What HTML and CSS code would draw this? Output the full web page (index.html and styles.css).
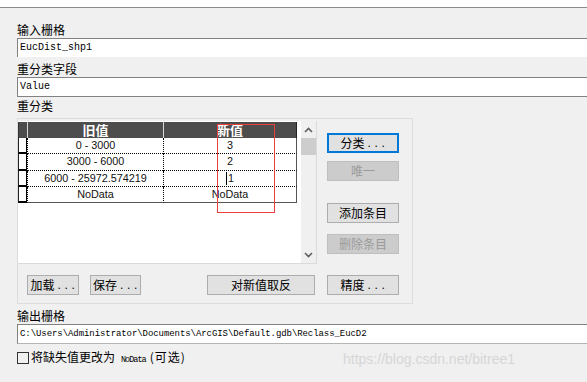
FILE: index.html
```html
<!DOCTYPE html>
<html lang="zh">
<head>
<meta charset="utf-8">
<link rel="stylesheet" href="styles.css">
</head>
<body>
<div class="topbar"></div>
<main class="dialog">
  <div class="label">输入栅格</div>
  <div class="field field-open">EucDist_shp1</div>
  <div class="label gap4">重分类字段</div>
  <div class="field field-closed">Value</div>
  <div class="label gap1">重分类</div>
  <section class="group">
    <div class="group-top">
      <div class="list">
        <div class="grid-area">
          <div class="row head">
            <div class="rh"></div><div class="c1">旧值</div><div class="c2">新值</div>
          </div>
          <div class="row"><div class="rh"></div><div class="c1">0 - 3000</div><div class="c2">3</div></div>
          <div class="row tall"><div class="rh"></div><div class="c1">3000 - 6000</div><div class="c2">2</div></div>
          <div class="row"><div class="rh"></div><div class="c1">6000 - 25972.574219</div><div class="c2"><span class="caret"></span>1</div></div>
          <div class="row last"><div class="rh"></div><div class="c1">NoData</div><div class="c2">NoData</div></div>
        </div>
        <div class="scrollbar">
          <div class="sb-btn"><svg width="9" height="6" viewBox="0 0 9 6"><polyline points="1,5 4.5,1.5 8,5" fill="none" stroke="#606060" stroke-width="1.6"/></svg></div>
          <div class="sb-thumb"></div>
          <div class="sb-track"></div>
          <div class="sb-btn"><svg width="9" height="6" viewBox="0 0 9 6"><polyline points="1,1 4.5,4.5 8,1" fill="none" stroke="#606060" stroke-width="1.6"/></svg></div>
        </div>
        <div class="mark"></div>
      </div>
      <div class="side">
        <div class="btn focus">分类<span class="dots">...</span></div>
        <div class="btn disabled b-unique">唯一</div>
        <div class="btn b-add">添加条目</div>
        <div class="btn disabled b-del">删除条目</div>
      </div>
    </div>
    <div class="group-bottom">
      <div class="btn b-load">加载<span class="dots">...</span></div>
      <div class="btn b-save">保存<span class="dots">...</span></div>
      <div class="btn b-invert">对新值取反</div>
      <div class="btn b-prec">精度<span class="dots">...</span></div>
    </div>
  </section>
  <div class="label gap4">输出栅格</div>
  <div class="field field-out">C:\Users\Administrator\Documents\ArcGIS\Default.gdb\Reclass_EucD2</div>
  <div class="check-row">
    <span class="checkbox"></span>
    <span class="check-text">将缺失值更改为<span class="mono">NoData</span><span class="opt">(可选)</span></span>
  </div>
  <div class="watermark">https://blog.csdn.net/bitree1</div>
</main>
</body>
</html>
```
FILE: styles.css
```css
html, body {
  margin: 0;
  padding: 0;
}
body {
  width: 587px;
  height: 382px;
  overflow: hidden;
  background: #f0f0f0;
  font-family: "Noto Sans CJK SC", "Noto Sans", sans-serif;
  color: #000;
  position: relative;
}
.topbar {
  height: 7px;
  background: #fff;
  border-bottom: 1px solid #8a8a8a;
}
.dialog {
  padding: 14px 0 0 17px;
}
.label {
  height: 16px;
  line-height: 16px;
  font-size: 12px;
  white-space: nowrap;
}
.gap4 { margin-top: 4px; }
.gap1 { margin-top: 1px; }
.field {
  box-sizing: border-box;
  height: 19px;
  background: #fff;
  border-top: 1px solid #828282;
  border-left: 1px solid #828282;
  font-family: "Liberation Mono", monospace;
  font-size: 10px;
  line-height: 18px;
  padding-left: 2px;
  white-space: nowrap;
}
.field-closed {
  height: 20px;
  border-bottom: 1px solid #828282;
}
.field-out {
  height: 20px;
  border-bottom: 1px solid #b4b4b4;
  font-size: 9px;
  letter-spacing: -0.07px;
}
.group {
  margin-top: 4px;
  box-sizing: border-box;
  width: 396px;
  border: 1px solid #dcdcdc;
  padding: 2px 0 8px 0;
}
.group-top {
  display: flex;
  align-items: flex-start;
}
.list {
  position: relative;
  display: flex;
  box-sizing: border-box;
  width: 299px;
  height: 143px;
  border-right: 1px solid #dadada;
  border-bottom: 1px solid #dadada;
}
.grid-area {
  width: 283px;
  background: #fff;
  padding-top: 1px;
}
.row {
  display: flex;
  height: 16px;
}
.row.tall { height: 17px; }
.row > div {
  box-sizing: border-box;
  height: 100%;
  text-align: center;
  font-family: "Liberation Sans", Arial, sans-serif;
  font-size: 10.8px;
  line-height: 15px;
  color: #111;
  white-space: nowrap;
}
.rh {
  width: 9px;
  background: #fff;
  border-left: 1px solid #222;
  border-right: 1px solid #000;
  border-bottom: 2px solid #000;
}
.c1 {
  width: 136px;
  border-left: 1px dotted #000;
  border-bottom: 1px dotted #000;
}
.c2 {
  width: 134px;
  border-left: 1px dotted #000;
  border-right: 1px solid #555;
  border-bottom: 1px dotted #000;
}
.row.head > div {
  background: #4d4d4d;
  color: #fff;
  font-family: "Noto Sans CJK SC", sans-serif;
  font-weight: bold;
  font-size: 13px;
  line-height: 16px;
  border-bottom: none;
}
.row.head .rh { border-right: none; border-left-color: #333; }
.row.head .c1 { border-left: 1px solid #d8d8d8; }
.row.head .c2 { border-left: 1px solid #d8d8d8; border-right: 1px solid #222; }
.row.last .c1, .row.last .c2 { border-bottom: 1px solid #555; }
.caret {
  display: inline-block;
  width: 1px;
  height: 13px;
  background: #000;
  vertical-align: -3px;
  margin-right: 1px;
}
.scrollbar {
  width: 15px;
  display: flex;
  flex-direction: column;
  background: #f0f0f0;
}
.sb-btn {
  height: 17px;
  display: flex;
  align-items: center;
  justify-content: center;
}
.sb-thumb {
  height: 17px;
  background: #cdcdcd;
}
.sb-track { flex: 1; }
.mark {
  position: absolute;
  left: 199px;
  top: 3px;
  width: 58px;
  height: 89px;
  box-sizing: border-box;
  border: 1px solid #e8403f;
}
.side {
  margin-left: 10px;
  padding-top: 12px;
  width: 72px;
  display: flex;
  flex-direction: column;
}
.btn {
  box-sizing: border-box;
  height: 20px;
  background: #e1e1e1;
  border: 1px solid #adadad;
  display: flex;
  align-items: center;
  justify-content: center;
  font-size: 12px;
  line-height: 16px;
  white-space: nowrap;
}
.btn.focus { border: 2px solid #0078d7; }
.btn.disabled {
  background: #cccccc;
  border-color: #bfbfbf;
  color: #9a9a9a;
}
.dots {
  font-family: "Liberation Sans", Arial, sans-serif;
  letter-spacing: 3.6px;
  margin-left: 3px;
  margin-right: -3px;
}
.b-unique { margin-top: 8px; }
.b-add { margin-top: 22px; }
.b-del { margin-top: 11px; }
.group-bottom {
  display: flex;
  margin-top: 11px;
  padding-left: 9px;
}
.b-load { width: 52px; }
.b-save { width: 51px; margin-left: 11px; }
.b-invert { width: 108px; margin-left: 66px; }
.b-prec { width: 72px; margin-left: 12px; }
.check-row {
  margin-top: 6px;
  height: 16px;
  display: flex;
  align-items: center;
}
.checkbox {
  box-sizing: border-box;
  width: 12px;
  height: 12px;
  border: 1px solid #333;
}
.check-text {
  margin-left: 2px;
  font-size: 12px;
  line-height: 16px;
  white-space: nowrap;
}
.mono {
  font-family: "Liberation Mono", monospace;
  font-size: 8.5px;
  letter-spacing: -1px;
  margin: 0 4px 0 6px;
}
.opt {
  letter-spacing: 1px;
}
.watermark {
  position: absolute;
  left: 343px;
  top: 350px;
  font-family: "Liberation Sans", Arial, sans-serif;
  font-size: 14px;
  line-height: 18px;
  color: #d6d6d6;
  white-space: nowrap;
}
```
